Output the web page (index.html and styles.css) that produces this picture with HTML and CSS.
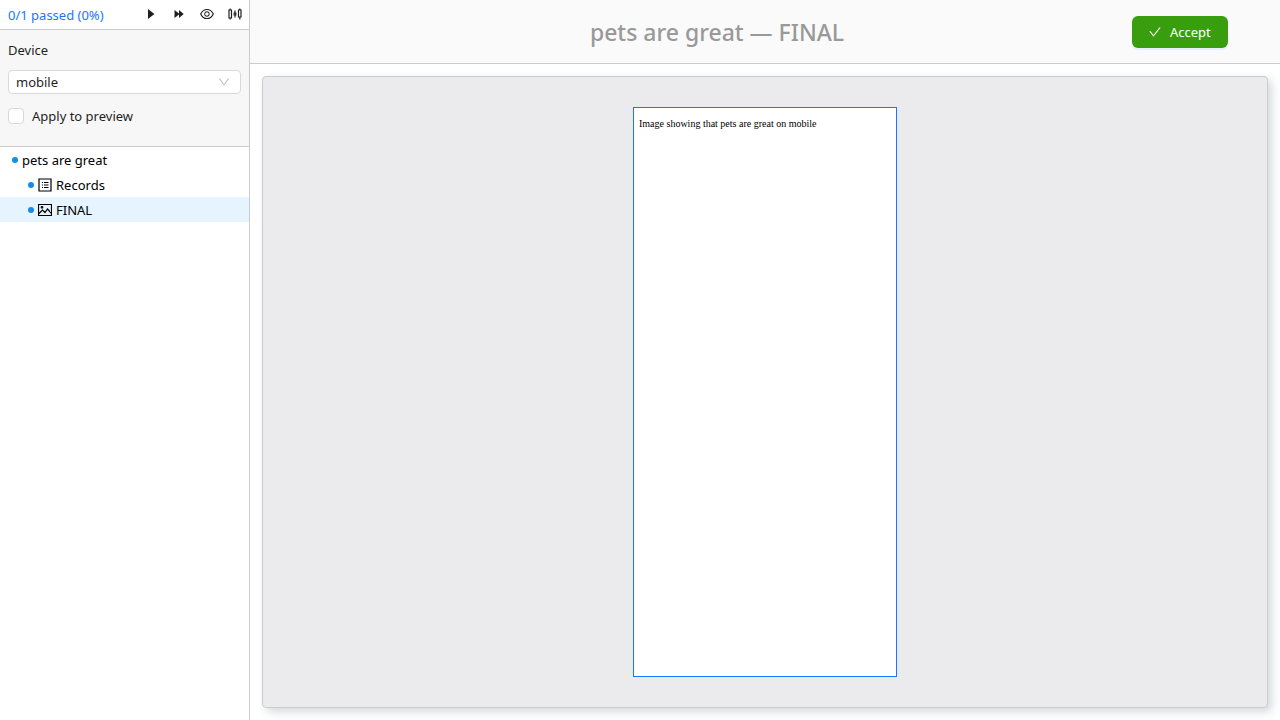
FILE: index.html
```html
<!DOCTYPE html>
<html lang="en">
<head>
<meta charset="utf-8">
<title>pets are great — FINAL</title>
<link rel="stylesheet" href="styles.css">
</head>
<body>
<div class="app">
  <aside class="sidebar">
    <div class="toolbar">
      <a class="summary" href="#">0/1 passed (0%)</a>
      <div class="actions">
        <button class="icon-button" type="button" aria-label="Run"><svg class="icon" viewBox="0 0 14 14"><path d="M4 2l6.400 5L4 12z"/></svg></button>
        <button class="icon-button" type="button" aria-label="Run all"><svg class="icon" viewBox="0 0 14 14"><path d="M2.500 3L7 6.500V3l4.700 4L7 11V7.500L2.500 11z"/></svg></button>
        <button class="icon-button" type="button" aria-label="Show preview"><svg class="icon icon-large" viewBox="0 0 1024 1024"><path d="M942.2 486.2C847.4 286.5 704.1 186 512 186c-192.2 0-335.4 100.5-430.2 300.3a60.3 60.3 0 000 51.500C176.6 737.5 319.9 838 512 838c192.2 0 335.4-100.5 430.2-300.3 7.700-16.200 7.700-35 0-51.500zM512 766c-161.3 0-279.4-81.800-362.7-254C232.6 339.8 350.7 258 512 258c161.3 0 279.4 81.800 362.7 254C791.5 684.2 673.4 766 512 766zm-4-430c-97.200 0-176 78.800-176 176s78.800 176 176 176 176-78.800 176-176-78.800-176-176-176zm0 288c-61.900 0-112-50.100-112-112s50.100-112 112-112 112 50.100 112 112-50.100 112-112 112z"/></svg></button>
        <button class="icon-button" type="button" aria-label="Settings"><svg class="icon icon-line" viewBox="0 0 14 14"><path d="M1 3h2.500v8H1zM2.200 1.500V3M2.200 11v1.500M6.200 6h1.600v2H6.200zM7 3.500V6M7 8v2.500M10.500 3H13v7h-2.500zM11.800 1.500V3M11.800 10v2.500"/></svg></button>
      </div>
    </div>
    <form class="options">
      <label class="field-label" for="device">Device</label>
      <div class="select">
        <select class="select-control" id="device"><option>mobile</option></select>
        <svg class="select-arrow" viewBox="0 0 1024 1024"><path d="M884 256h-75c-5.100 0-9.900 2.500-12.900 6.600L512 654.2 227.9 262.6c-3-4.100-7.800-6.600-12.900-6.600h-75c-6.500 0-10.300 7.400-6.500 12.700l352.6 486.1c12.800 17.600 39 17.600 51.700 0l352.6-486.1c3.900-5.300.1-12.700-6.400-12.700z"/></svg>
      </div>
      <label class="check"><input class="check-box" type="checkbox">Apply to preview</label>
    </form>
    <nav class="tree">
      <a class="node" href="#"><span class="dot"></span><span>pets are great</span></a>
      <a class="node node-child" href="#"><span class="dot"></span><svg class="icon icon-line" viewBox="0 0 14 14"><path d="M1 1h12v12H1zM4 4.500h1M6 4.500h4.500M4 7h1M6 7h4.500M4 9.500h1M6 9.500h4.500"/></svg><span>Records</span></a>
      <a class="node node-child node-active" href="#"><span class="dot"></span><svg class="icon icon-line" viewBox="0 0 14 14"><path d="M.5 1.500h13v11H.5zM1 10.500l3.500-3.500 2.500 2.500L9.500 6l4 4.500"/><circle cx="4" cy="4.300" r=".8"/></svg><span>FINAL</span></a>
    </nav>
  </aside>
  <main class="content">
    <header class="header">
      <h1 class="title">pets are great — FINAL</h1>
      <button class="accept" type="button"><svg class="icon" viewBox="0 0 1024 1024"><path d="M912 190h-69.900c-9.800 0-19.100 4.500-25.100 12.200L404.7 724.5 207 474a32 32 0 00-25.100-12.200H112c-6.700 0-10.400 7.700-6.300 12.900l273.900 347c12.800 16.200 37.400 16.200 50.300 0l488.4-618.900c4.100-5.100.4-12.800-6.300-12.800z"/></svg><span>Accept</span></button>
    </header>
    <section class="stage">
      <div class="frame"><p class="caption">Image showing that pets are great on mobile</p></div>
    </section>
  </main>
</div>
</body>
</html>
```
FILE: styles.css
```css
* { box-sizing: border-box; }
body {
  margin: 0;
  font: 13px/22px "Segoe UI", "Noto Sans", "Open Sans", sans-serif;
  color: #1f1f1f;
  background: #fff;
}
button, select { font: inherit; color: inherit; }
a { color: inherit; text-decoration: none; }

.app { display: flex; height: 100vh; }
.sidebar {
  flex: none;
  width: 250px;
  border-right: 1px solid #ccc;
}
.toolbar {
  display: flex;
  align-items: center;
  justify-content: space-between;
  height: 30px;
  padding-left: 8px;
  border-bottom: 1px solid #ccc;
}
.summary { color: #1677ff; }
.actions { display: flex; align-self: flex-start; }
.icon-button {
  display: flex;
  align-items: center;
  justify-content: center;
  width: 28px;
  height: 28px;
  padding: 0;
  border: 0;
  background: none;
}
.icon { flex: none; width: 14px; height: 14px; fill: currentColor; }
.icon-large { width: 16px; height: 16px; }
.icon-line { fill: none; stroke: currentColor; stroke-width: 1.2; }

.options {
  display: flex;
  flex-direction: column;
  padding: 9px 8px 19px;
  background: #f7f7f7;
  border-bottom: 1px solid #ccc;
}
.field-label { margin-bottom: 9px; }
.select { position: relative; margin-bottom: 11px; }
.select-control {
  display: block;
  appearance: none;
  width: 100%;
  height: 24px;
  padding: 0 24px 0 7px;
  border: 1px solid #d9d9d9;
  border-radius: 4px;
  background: #fff;
}
.select-arrow {
  position: absolute;
  top: 5px;
  right: 10px;
  width: 14px;
  height: 14px;
  fill: #bfbfbf;
  pointer-events: none;
}
.check { display: flex; align-items: center; gap: 8px; }
.check-box {
  appearance: none;
  width: 16px;
  height: 16px;
  margin: 0;
  border: 1px solid #d9d9d9;
  border-radius: 4px;
  background: #fff;
}
.check-box:checked { background: #1677ff; border-color: #1677ff; }

.node {
  display: flex;
  align-items: center;
  gap: 4px;
  height: 25px;
  padding-left: 12px;
  color: #000;
}
.node-child { padding-left: 28px; }
.node-active { background: #e6f4ff; }
.dot { width: 6px; height: 6px; border-radius: 50%; background: #108ee9; }

.content { flex: 1; display: flex; flex-direction: column; min-width: 0; }
.header {
  display: flex;
  align-items: center;
  height: 64px;
  padding: 0 52px;
  background: #fafafa;
  border-bottom: 1px solid #ccc;
}
.title {
  flex: 1;
  margin: 0;
  font-size: 23px;
  line-height: 32px;
  font-weight: 500;
  text-align: center;
  color: #999;
}
.accept {
  display: flex;
  align-items: center;
  gap: 8px;
  min-width: 96px;
  height: 32px;
  padding: 0 16px;
  border: 0;
  border-radius: 6px;
  color: #fff;
  background: #389e0d;
  box-shadow: 0 2px 0 #e6f0ff;
}
.stage {
  flex: 1;
  display: flex;
  justify-content: center;
  min-height: 0;
  margin: 12px;
  padding: 30px;
  border: 1px solid #ccc;
  border-radius: 4px;
  background: #ebebed;
  box-shadow: 4px 4px 10px #d5dade;
}
.frame {
  height: 100%;
  aspect-ratio: 264 / 570;
  padding: 10px 5px;
  border: 1px solid #1677ff;
  background: #fff;
}
.caption {
  margin: 0;
  font: 10px/12px "Liberation Serif", serif;
  color: #000;
  white-space: nowrap;
}
```
